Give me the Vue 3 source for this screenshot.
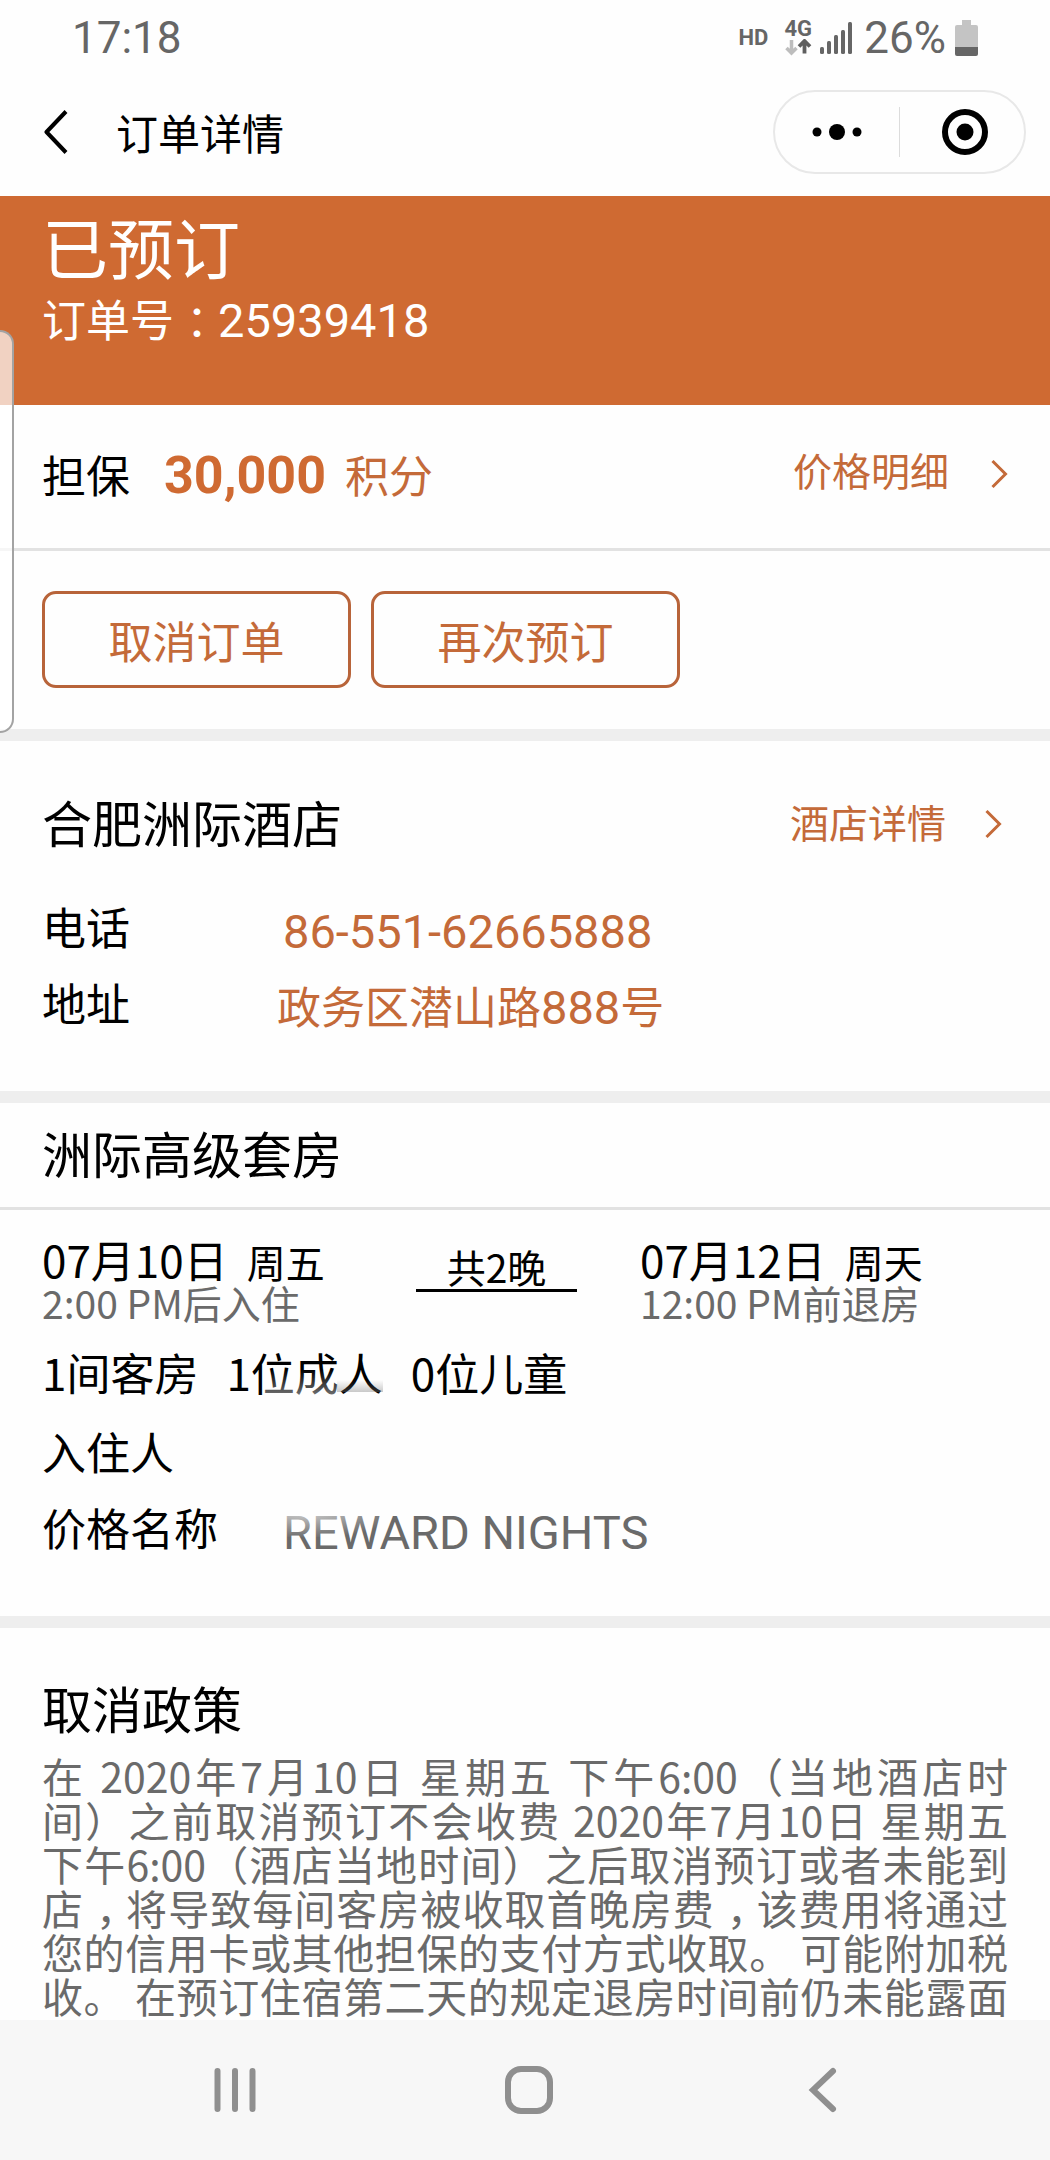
<script setup>
const order = { status: '已预订', number: '25939418', points: '30,000' }
const stay = {
  checkIn: { date: '07月10日', day: '周五', time: '2:00 PM后入住' },
  checkOut: { date: '07月12日', day: '周天', time: '12:00 PM前退房' },
  nights: '共2晚',
}
</script>

<template>
  <div class="screen">
    <header class="status">
      <span class="clock">17:18</span>
      <span class="hd">HD</span>
      <span class="network">
        <span>4G</span>
        <svg width="28" height="18" viewBox="0 0 28 18" aria-hidden="true">
          <path d="M7.500 1v12M2.500 9l5 5 5-5" fill="none" stroke="#bdbdbd" stroke-width="3.500" />
          <path d="M20.500 14.500V3M15 7.500l5.500-5.500 5.500 5.500" fill="none" stroke="#5f5f5f" stroke-width="3.800" />
        </svg>
      </span>
      <svg class="signal" width="32" height="32" viewBox="0 0 32 32" fill="#666" aria-hidden="true">
        <rect x="0" y="25" width="4" height="7" rx="1.500" />
        <rect x="7" y="19" width="4" height="13" rx="1.500" />
        <rect x="14" y="13" width="4" height="19" rx="1.500" />
        <rect x="21" y="8" width="4" height="24" rx="1.500" />
        <rect x="28" y="0" width="4" height="32" rx="1.500" />
      </svg>
      <span class="percent">26%</span>
      <svg class="battery" width="23" height="36" viewBox="0 0 23 36" aria-hidden="true">
        <path d="M7 0h9v5h5q2 0 2 2v20H0V7q0-2 2-2h5z" fill="#c4c4c4" />
        <path d="M0 27h23v7q0 2-2 2H2q-2 0-2-2z" fill="#666" />
      </svg>
    </header>

    <nav class="topbar">
      <button class="plain" type="button" aria-label="返回">
        <svg width="24" height="44" viewBox="0 0 24 44" aria-hidden="true">
          <path d="M22 1.500L2.500 22 22 42.500" fill="none" stroke="#000" stroke-width="4" stroke-linejoin="round" />
        </svg>
      </button>
      <h1>订单详情</h1>
      <div class="capsule">
        <button class="plain" type="button" aria-label="更多">
          <svg width="50" height="16" viewBox="0 0 50 16" aria-hidden="true">
            <circle cx="5" cy="8" r="4.500" /><circle cx="25" cy="8" r="8" /><circle cx="45" cy="8" r="4.500" />
          </svg>
        </button>
        <i class="split"></i>
        <button class="plain close" type="button" aria-label="关闭">
          <svg width="48" height="48" viewBox="0 0 48 48" aria-hidden="true">
            <circle cx="24" cy="24" r="20" fill="none" stroke="#000" stroke-width="6" />
            <circle cx="24" cy="24" r="8.500" />
          </svg>
        </button>
      </div>
    </nav>

    <main>
      <section class="hero">
        <h2>{{ order.status }}</h2>
        <p>订单号<span class="mid">：</span><span class="num">{{ order.number }}</span></p>
      </section>

      <section class="guarantee">
        <span>担保</span>
        <strong>{{ order.points }}</strong>
        <span class="unit">积分</span>
        <a class="more" href="#price">
          <span>价格明细</span>
          <svg width="17" height="30" viewBox="0 0 17 30" aria-hidden="true"><path d="M1.500 2L14.500 15 1.500 28" /></svg>
        </a>
      </section>

      <section class="actions">
        <button type="button">取消订单</button>
        <button type="button">再次预订</button>
      </section>

      <section class="block hotel">
        <div class="heading">
          <h3>合肥洲际酒店</h3>
          <a class="more" href="#hotel">
            <span>酒店详情</span>
            <svg width="17" height="30" viewBox="0 0 17 30" aria-hidden="true"><path d="M1.500 2L14.500 15 1.500 28" /></svg>
          </a>
        </div>
        <dl>
          <div class="row">
            <dt>电话</dt>
            <dd><a class="num" href="tel:8655162665888">86-551-62665888</a></dd>
          </div>
          <div class="row wide">
            <dt>地址</dt>
            <dd><a href="#map">政务区潜山路<span class="num">888</span>号</a></dd>
          </div>
        </dl>
      </section>

      <section class="block">
        <h3 class="room">洲际高级套房</h3>
        <div class="stay">
          <div>
            <p class="date">{{ stay.checkIn.date }}<span>{{ stay.checkIn.day }}</span></p>
            <p class="time">{{ stay.checkIn.time }}</p>
          </div>
          <p class="nights">{{ stay.nights }}</p>
          <div>
            <p class="date">{{ stay.checkOut.date }}<span>{{ stay.checkOut.day }}</span></p>
            <p class="time">{{ stay.checkOut.time }}</p>
          </div>
        </div>
        <p class="guests"><span>1间客房</span><span class="adults">1位成人</span><span>0位儿童</span></p>
        <dl class="rate">
          <div class="row">
            <dt>入住人</dt>
            <dd></dd>
          </div>
          <div class="row">
            <dt>价格名称</dt>
            <dd><span class="num faded">REWARD NIGHTS</span></dd>
          </div>
        </dl>
      </section>

      <section class="block policy">
        <h3>取消政策</h3>
        <p>
          在 2020年7月10日 星期五 下午6:00（当地酒店时<br>间）之前取消预订不会收费 2020年7月10日 星期五<br>下午6:00（酒店当地时间）之后取消预订或者未能到<br>店<span class="mid">，</span>将导致每间客房被收取首晚房费<span class="mid">，</span>该费用将通过<br>您的信用卡或其他担保的支付方式收取。 可能附加税<br>收。 在预订住宿第二天的规定退房时间前仍未能露面
        </p>
      </section>
    </main>

    <footer class="sysnav">
      <button class="plain" type="button" aria-label="最近任务">
        <svg width="48" height="48" viewBox="0 0 48 48" aria-hidden="true">
          <path d="M6.500 5v38M24 5v38M41.500 5v38" />
        </svg>
      </button>
      <button class="plain" type="button" aria-label="主页">
        <svg width="48" height="48" viewBox="0 0 48 48" aria-hidden="true">
          <rect x="3" y="3" width="42" height="42" rx="13" />
        </svg>
      </button>
      <button class="plain" type="button" aria-label="后退">
        <svg width="48" height="48" viewBox="0 0 48 48" aria-hidden="true">
          <path d="M34 5L14 24 34 43" />
        </svg>
      </button>
    </footer>

    <aside class="edge" aria-hidden="true"></aside>
  </div>
</template>

<style>
body {
  background: #fefefe;
}
</style>

<style scoped>
.screen {
  position: relative;
  display: flex;
  flex-direction: column;
  min-height: 100vh;
  background: #fefefe;
  color: #000;
  font-family: "Noto Sans CJK SC", sans-serif;
  font-size: 44px;
  overflow: hidden;
}
h1, h2, h3, p, dl, dd {
  margin: 0;
  font-weight: 400;
}
a {
  color: #c46a39;
  text-decoration: none;
}
.plain {
  display: flex;
  align-items: center;
  justify-content: center;
  padding: 0;
  border: 0;
  background: none;
}
.num {
  font-family: Roboto, sans-serif;
  font-size: 47px;
  line-height: 1;
}
/* Centres full-width punctuation in its cell */
.mid {
  margin: 0 -12px 0 12px;
}

/* Status bar */
.status {
  display: flex;
  align-items: center;
  height: 75px;
  padding: 0 72px;
  color: #666;
  font-family: Roboto, sans-serif;
}
.clock {
  margin-right: auto;
}
.hd {
  font-size: 22px;
  font-weight: 700;
}
.network {
  display: flex;
  flex-direction: column;
  align-items: center;
  margin: 0 8px 0 16px;
  font-size: 22px;
  font-weight: 700;
  line-height: 20px;
}
.percent {
  margin: 0 9px 0 12px;
}

/* Title bar */
.topbar {
  display: flex;
  align-items: center;
  height: 114px;
  padding: 0 24px 7px 44px;
}
.topbar h1 {
  margin-left: 48px;
  font-size: 42px;
  line-height: 60px;
}
.capsule {
  display: flex;
  align-items: center;
  box-sizing: border-box;
  width: 253px;
  height: 84px;
  margin-left: auto;
  border: 2px solid #e8e8e8;
  border-radius: 42px;
}
.capsule .plain {
  flex: 1;
}
.close svg {
  margin-left: 6px;
}
.split {
  width: 1px;
  height: 50px;
  background: #dcdcdc;
}

/* Order state */
.hero {
  padding: 7px 42px 56px;
  background: #cf6a32;
  color: #fff;
}
.hero h2 {
  font-size: 66px;
  line-height: 84px;
}
.hero p {
  line-height: 62px;
}

.guarantee {
  display: flex;
  align-items: baseline;
  padding: 39px 42px 44px;
  border-bottom: 3px solid #e2e2e2;
  line-height: 60px;
}
.guarantee strong {
  margin: 0 19px 0 34px;
  color: #cf6a32;
  font-family: Roboto, sans-serif;
  font-size: 52px;
  line-height: 1;
}
.unit {
  color: #c46a39;
}
.more {
  display: flex;
  align-items: center;
  gap: 42px;
  margin-left: auto;
  font-size: 39px;
  line-height: 50px;
}
.more path {
  fill: none;
  stroke: #c46a39;
  stroke-width: 3;
}
.guarantee .more {
  align-self: center;
}
.guarantee .more span {
  margin-bottom: 10px;
}

.actions {
  display: flex;
  gap: 20px;
  padding: 40px 42px 41px;
}
.actions button {
  width: 309px;
  height: 97px;
  padding: 0;
  border: 3px solid #b8643a;
  border-radius: 14px;
  background: none;
  color: #c46a39;
  font-family: inherit;
  font-size: 44px;
}

/* Sections parted by a grey band */
.block {
  border-top: 12px solid #eee;
}
h3 {
  font-size: 50px;
}
.heading {
  display: flex;
  align-items: center;
  padding: 41px 48px 28px 42px;
  line-height: 78px;
}
.heading .more {
  gap: 39px;
}
.heading .more svg {
  margin-top: 6px;
}
dl {
  padding: 0 42px 51px;
}
.row {
  display: flex;
  align-items: center;
  height: 76px;
}
dt {
  width: 241px;
}
.wide dt {
  width: 235px;
}
dd {
  padding-top: 6px;
}
.room {
  padding: 12px 42px 18px;
  border-bottom: 3px solid #e2e2e2;
  line-height: 74px;
}
.stay {
  display: grid;
  grid-template-columns: 374fr 224fr 368fr;
  align-items: start;
  padding: 26px 42px 0;
}
.date {
  line-height: 46px;
}
.date span {
  margin-left: 19px;
  font-size: 39px;
  line-height: 1;
}
.time {
  color: #6a6a6a;
  font-size: 39px;
  line-height: 40px;
}
.nights {
  width: 161px;
  margin-top: 7px;
  border-bottom: 3px solid #000;
  font-size: 39px;
  line-height: 46px;
  text-align: center;
}
.guests {
  display: flex;
  gap: 28px;
  padding: 20px 42px 11px;
  line-height: 60px;
}
.adults,
.faded {
  position: relative;
}
.adults::after {
  content: "";
  position: absolute;
  right: 0;
  bottom: 10px;
  width: 46px;
  height: 12px;
  background: linear-gradient(to bottom, rgba(120, 120, 120, 0), rgba(120, 120, 120, 0.4));
}
.adults::before {
  content: "";
  position: absolute;
  right: 46px;
  bottom: 6px;
  width: 74px;
  height: 26px;
  background: linear-gradient(to bottom, rgba(254, 254, 254, 0), rgba(254, 254, 254, 0.45));
}
.faded {
  color: #6a6a6a;
}
.faded::after {
  content: "";
  position: absolute;
  top: 4px;
  left: 0;
  width: 110px;
  height: 28px;
  background: radial-gradient(ellipse at 20% 0, rgba(254, 254, 254, 0.75), rgba(254, 254, 254, 0) 75%);
}

.policy {
  padding: 46px 42px 2px;
}
.policy h3 {
  line-height: 66px;
}
.policy p {
  margin-top: 13px;
  color: #6a6a6a;
  font-size: 41px;
  line-height: 44px;
  text-align: justify;
  text-align-last: justify;
}

/* System navigation */
.sysnav {
  display: flex;
  align-items: center;
  height: 140px;
  margin-top: auto;
  padding: 0 80px 0 88px;
  background: #f7f7f7;
}
.sysnav .plain {
  flex: 1;
}
.sysnav svg {
  fill: none;
  stroke: #8f8f8f;
  stroke-width: 6;
  stroke-linecap: round;
}

/* Edge panel handle */
.edge {
  position: absolute;
  top: 330px;
  left: 0;
  box-sizing: border-box;
  width: 14px;
  height: 403px;
  border: 2px solid #a3a3a3;
  border-left: 0;
  border-radius: 0 14px 14px 0;
  background: rgba(255, 255, 255, 0.7);
}
</style>
